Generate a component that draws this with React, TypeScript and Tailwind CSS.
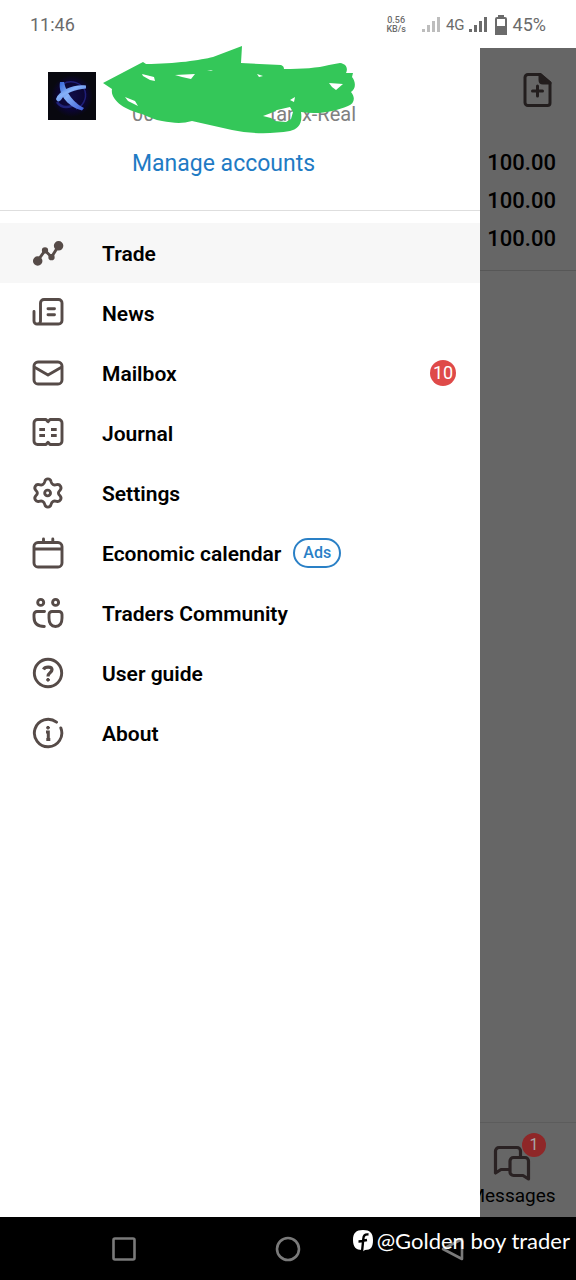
import type { ReactNode } from "react";

function Icon({ children, className = "size-8" }: { children: ReactNode; className?: string }) {
  return (
    <svg
      viewBox="0 0 32 32"
      className={className}
      fill="none"
      stroke="currentColor"
      strokeWidth="2.9"
      strokeLinecap="round"
      strokeLinejoin="round"
      aria-hidden="true"
    >
      {children}
    </svg>
  );
}

const tradeIcon = (
  <Icon>
    <path d="M5.500 24 L13 13.500 L19.500 20 L26.500 9" />
    <circle cx="5.700" cy="24" r="3.300" fill="currentColor" />
    <circle cx="26.600" cy="8.800" r="3.300" fill="currentColor" />
    <circle cx="13" cy="13.300" r="1.700" fill="currentColor" />
    <circle cx="19.500" cy="20.200" r="1.700" fill="currentColor" />
  </Icon>
);

const newsIcon = (
  <Icon>
    <path d="M8.500 24.500 V6 A3.500 3.500 0 0 1 12 2.500 H26.500 A3.500 3.500 0 0 1 30 6 V23.500 A3.500 3.500 0 0 1 26.500 27 H5 A3 3 0 0 1 2 24 V14.500 M8.500 24 A3 3 0 0 1 5.500 27" />
    <path d="M16 11.700 H22.500 M16 17.700 H22.500" />
  </Icon>
);

const mailIcon = (
  <Icon>
    <rect x="2" y="5" width="28" height="22" rx="4" />
    <path d="M3 10.500 L16 18 L29 10.500" />
  </Icon>
);

const journalIcon = (
  <Icon>
    <path d="M16 4.700 L14 2.500 H5.500 A3.500 3.500 0 0 0 2 6 V24 A3.500 3.500 0 0 0 5.500 27.500 H14 L16 25.300 L18 27.500 H26.500 A3.500 3.500 0 0 0 30 24 V6 A3.500 3.500 0 0 0 26.500 2.500 H18 Z" />
    <path strokeLinecap="butt" d="M7.300 12.500 H13 M7.300 18.500 H13 M19 12.500 H24.700 M19 18.500 H24.700" />
  </Icon>
);

const settingsIcon = (
  <Icon>
    <path d="M12.800 4.500 C13.600 1 18.200 1 19 4.500 C19.800 7.600 21.600 8.600 24.700 7.700 C28.200 6.900 30.300 10.600 28 13.200 C25.900 15.200 25.900 16.800 28 18.800 C30.300 21.400 28.200 25.100 24.700 24.300 C21.600 23.400 19.800 24.400 19 27.500 C18.200 31 13.600 31 12.800 27.500 C12 24.400 10.200 23.400 7.100 24.300 C3.600 25.100 1.500 21.400 3.800 18.800 C5.900 16.800 5.900 15.200 3.800 13.200 C1.500 10.600 3.600 6.900 7.100 7.700 C10.200 8.600 12 7.600 12.800 4.500 Z" />
    <circle cx="15.600" cy="16" r="2.900" />
  </Icon>
);

const calendarIcon = (
  <Icon>
    <rect x="2" y="5.500" width="28" height="24.500" rx="4" />
    <path d="M2.500 12 H29.500 M11.500 2 V5 M20.800 2 V5" />
  </Icon>
);

const communityIcon = (
  <Icon>
    <circle cx="8.700" cy="5.400" r="3" />
    <circle cx="23.600" cy="5.400" r="3" />
    <path d="M12.500 14.500 H5 A3 3 0 0 0 2 17.500 V20 C2 26.500 5.500 29.500 12.300 29.500" />
    <path d="M20 14.500 H27 A3 3 0 0 1 30 17.500 V21 C30 26.500 28 29.500 23.500 29.500 C19 29.500 17 26.500 17 21 V17.500 A3 3 0 0 1 20 14.500 Z" />
  </Icon>
);

const guideIcon = (
  <Icon>
    <circle cx="16" cy="16" r="13.700" />
    <path strokeWidth="3.200" strokeLinecap="butt" d="M11.500 12.500 C13 9.300 20 9.300 20 12.800 C20 15.600 16 15.500 16 19.500" />
    <circle cx="16" cy="22.800" r="1.400" fill="currentColor" strokeWidth="1" />
  </Icon>
);

const aboutIcon = (
  <Icon>
    <path d="M24.500 5.200 A13.700 13.700 0 1 0 28.800 10.900" />
    <path strokeWidth="3" strokeLinecap="butt" d="M14 15 H16.300 V23.300 M14.300 22.500 H18.300" strokeLinejoin="miter" />
    <circle cx="16" cy="10.700" r="1.400" fill="currentColor" strokeWidth="1" />
  </Icon>
);

type Item = { label: string; icon: ReactNode; active?: boolean; ads?: boolean; count?: number };

const items: Item[] = [
  { label: "Trade", icon: tradeIcon, active: true },
  { label: "News", icon: newsIcon },
  { label: "Mailbox", icon: mailIcon, count: 10 },
  { label: "Journal", icon: journalIcon },
  { label: "Settings", icon: settingsIcon },
  { label: "Economic calendar", icon: calendarIcon, ads: true },
  { label: "Traders Community", icon: communityIcon },
  { label: "User guide", icon: guideIcon },
  { label: "About", icon: aboutIcon },
];

const balances = ["100.00", "100.00", "100.00"];

function Signal({ className }: { className: string }) {
  return (
    <svg viewBox="0 0 18 16" className={className} fill="currentColor" aria-hidden="true">
      <rect x="0" y="12" width="3" height="3" />
      <rect x="5" y="8" width="3" height="7" />
      <rect x="10" y="4" width="3" height="11" />
      <rect x="15" y="0" width="3" height="15" />
    </svg>
  );
}

function StatusBar() {
  return (
    <header className="flex h-12 shrink-0 items-center justify-between pt-0.5 pr-7.5 pl-7.5 text-[#6b6b6b]">
      <time className="text-lg">11:46</time>
      <div className="flex items-center">
        <div className="text-center text-[9px] leading-[9px] font-medium">
          <div>0.56</div>
          <div>KB/s</div>
        </div>
        <Signal className="ml-4 h-4 w-4.5 text-[#bdbdbd]" />
        <span className="ml-1.5 text-[15px]">4G</span>
        <Signal className="ml-1 h-4 w-4.5" />
        <svg viewBox="0 0 12 20" className="ml-2 h-5 w-3" aria-hidden="true">
          <path d="M3 0 H9 V2 H3 Z M0 11 H12 V20 H0 Z" fill="currentColor" />
          <rect x="1" y="3" width="10" height="16" rx="1" fill="none" stroke="currentColor" strokeWidth="2" />
        </svg>
        <span className="ml-1.5 text-lg">45%</span>
      </div>
    </header>
  );
}

function Avatar() {
  return (
    <svg viewBox="0 0 48 48" className="size-12" role="img" aria-label="Broker">
      <defs>
        <radialGradient id="glow">
          <stop offset="0" stopColor="#100d48" />
          <stop offset="0.700" stopColor="#0b0530" />
          <stop offset="1" stopColor="#08080f" />
        </radialGradient>
        <linearGradient id="ribbon" x1="0" y1="0" x2="1" y2="1">
          <stop offset="0" stopColor="#3565d8" />
          <stop offset="0.400" stopColor="#86b2f8" />
          <stop offset="1" stopColor="#3c5ad8" />
        </linearGradient>
      </defs>
      <rect width="48" height="48" fill="#08080f" />
      <circle cx="24" cy="24" r="21" fill="url(#glow)" />
      <path d="M15 12 C23 7 34 11 37 19 C39 27 35 34 28 37" fill="none" stroke="#1f1f78" strokeWidth="1.500" />
      <path d="M9 30 C14 37 22 36 29 31" fill="none" stroke="#1f2278" strokeWidth="2.500" />
      <path d="M12 10 C10 21 18 34 34 38.500 L36 36 C26 31 18 21 16 10 Z" fill="url(#ribbon)" />
      <path d="M38 13.500 C26 12 11 18 8 27 C9 30 11 30 13 28 C17 21 27 17.500 38 16.500 Z" fill="url(#ribbon)" />
    </svg>
  );
}

function Scribble() {
  return (
    <svg viewBox="0 0 260 90" className="absolute -top-0.5 left-25 h-22.5 w-65" aria-hidden="true">
      <path
        fill="#34c759"
        fillRule="evenodd"
        d="M3 37 L43 16 L46 18 C75 18 101 14 113 11 L142 0 L141 17 L181 19 Q184 20 184 23 C202 23 218 22 229 19 L240 17 C247 18 248 23 246 27 L253 27 L252 31 C256 36 256 43 251 46 C256 52 254 58 248 60 C235 65 220 69 201 66 C203 79 197 83 190 85 C172 88 150 88 132 84 L92 75 C82 78 73 77 62 75 C55 74 49 71 42 68 C25 64 10 54 12 43 Z M163 70 L171 67 L177 64 L190 61 L193 66 L191 73 L186 76 L175 75 L171 72 Z"
      />
      <path
        fill="#fff"
        d="M42 28 L54 31 L55 35 L50 34 L43 30 Z M75 29 L95 28 L91 33 L82 31 Z M25 51 L35 55 L38 60 L28 55 Z M107 25 L113 24 L111 25 Z M157 28 L163 30 L159 31 Z M229 37 L243 38 L236 44 L232 41 Z M190 54 L195 51 L194 56 Z"
      />
    </svg>
  );
}

function Account() {
  return (
    <section className="relative flex h-40.5 shrink-0 gap-9 pt-6 pl-12">
      <Avatar />
      <div className="flex flex-col items-start pt-7">
        <p className="flex h-7 w-56 items-center gap-2 text-xl text-[#808080]">
          <span>00</span>
          <span className="ml-auto">tar</span>
          <span>x-Real</span>
        </p>
        <a href="#accounts" className="mt-5 text-[23px] leading-8 text-[#1f7bc4]">
          Manage accounts
        </a>
      </div>
      <Scribble />
    </section>
  );
}

function Drawer() {
  return (
    <aside className="flex w-5/6 shrink-0 flex-col bg-white">
      <Account />
      <nav className="border-t border-[#dedede] pt-3">
        <ul>
          {items.map((item) => (
            <li key={item.label}>
              <a
                href="#menu"
                className={
                  item.active
                    ? "flex h-15 items-center bg-[#f7f7f7] pr-6 pl-8"
                    : "flex h-15 items-center pr-6 pl-8"
                }
              >
                <span className="text-[#564b48]">{item.icon}</span>
                <span className="ml-9.5 pt-0.5 text-[21px] leading-8 font-semibold text-black">{item.label}</span>
                {item.ads && (
                  <span className="ml-3 flex h-7.5 items-center rounded-full border-2 border-[#2a80c6] px-2 text-base font-medium text-[#2a80c6]">
                    Ads
                  </span>
                )}
                {item.count && (
                  <span className="ml-auto flex size-6.5 items-center justify-center rounded-full bg-[#df4a49] text-lg text-white">
                    {item.count}
                  </span>
                )}
              </a>
            </li>
          ))}
        </ul>
      </nav>
    </aside>
  );
}

function DimmedPage() {
  return (
    <main className="flex min-w-0 flex-1 flex-col overflow-hidden bg-[#666666] text-black">
      <div className="flex flex-col items-end border-b border-[#575757] pr-5 pb-3">
        <button type="button" aria-label="New order" className="mt-6 text-[#231e1e]">
          <svg viewBox="0 0 36 36" className="size-9" fill="none" stroke="currentColor" strokeWidth="3" strokeLinejoin="round" strokeLinecap="round">
            <path d="M8 2.500 H20 L30 11 V31 A2.500 2.500 0 0 1 27.500 33.500 H8 A3 3 0 0 1 5 30.500 V5.500 A3 3 0 0 1 8 2.500 Z" />
            <path d="M20 2.500 V8 Q20 11 23 11 H30 Z" fill="currentColor" />
            <path d="M17.500 14 V24 M12.500 19 H22.500" />
          </svg>
        </button>
        <ul className="mt-9 text-right text-[22px] leading-[38px] font-medium">
          {balances.map((b, i) => (
            <li key={i}>{b}</li>
          ))}
        </ul>
      </div>
      <div className="mt-auto flex justify-end border-t border-[#5c5c5c] pt-2 pb-2">
        <a href="#messages" className="flex w-32 shrink-0 flex-col items-center">
          <span className="relative mt-3 text-[#2a2223]">
            <svg viewBox="0 0 40 40" className="size-10" fill="none" stroke="currentColor" strokeWidth="3.200" strokeLinejoin="round" aria-hidden="true">
              <path d="M17 26.500 H9 L3.500 30 V8 A3.500 3.500 0 0 1 7 4.500 H25 A3.500 3.500 0 0 1 28.500 8 V14" />
              <path d="M21.500 14.500 H33 A3.500 3.500 0 0 1 36.500 18 V36 L31 32.500 H21.500 A3.500 3.500 0 0 1 18 29 V18 A3.500 3.500 0 0 1 21.500 14.500 Z" />
            </svg>
            <span className="absolute -top-2.5 left-7.5 flex size-6 items-center justify-center rounded-full bg-[#8f2728] text-base text-[#a8a8a8]">
              1
            </span>
          </span>
          <span className="text-[19px] leading-[26px]">Messages</span>
        </a>
      </div>
    </main>
  );
}

function SystemBar() {
  return (
    <footer className="relative h-[63px] shrink-0 bg-black text-[#7a7a7a]">
      <div className="grid h-full grid-cols-[43%_14%_43%] items-center">
        <button type="button" aria-label="Recent apps" className="justify-self-center">
          <svg viewBox="0 0 24 24" className="size-6" fill="none" stroke="currentColor" strokeWidth="2.600">
            <rect x="1.500" y="1.500" width="21" height="21" rx="1.500" />
          </svg>
        </button>
        <button type="button" aria-label="Home" className="justify-self-center">
          <svg viewBox="0 0 26 26" className="size-6.5" fill="none" stroke="currentColor" strokeWidth="2.600">
            <circle cx="13" cy="13" r="11" />
          </svg>
        </button>
        <button type="button" aria-label="Back" className="justify-self-center">
          <svg viewBox="0 0 24 24" className="size-6" fill="none" stroke="currentColor" strokeWidth="2.600" strokeLinejoin="round">
            <path d="M3 12 L22 2 V22 Z" />
          </svg>
        </button>
      </div>
      <p className="absolute top-2 right-1.5 flex items-center gap-1 font-['Lato',sans-serif] text-[22px] leading-8 text-white">
        <svg viewBox="0 0 20 22" className="h-5.5 w-5" aria-hidden="true">
          <path fill="#fff" d="M10 0 C17 0 20 3 20 10 C20 17 18 20 12 20 L9 22 V20 C3 20 0 17 0 10 C0 3 3 0 10 0 Z" />
          <path d="M15.500 4.500 C11.500 4 10.500 6 10.300 9 L9 22 M5.500 11.500 C9 11.500 11 10.500 14 10" fill="none" stroke="#000" strokeWidth="2.400" />
        </svg>
        <span>@Golden boy trader</span>
      </p>
    </footer>
  );
}

export default function App() {
  return (
    <div className="flex min-h-screen flex-col bg-white font-['Roboto',sans-serif]">
      <StatusBar />
      <div className="flex flex-1">
        <Drawer />
        <DimmedPage />
      </div>
      <SystemBar />
    </div>
  );
}
